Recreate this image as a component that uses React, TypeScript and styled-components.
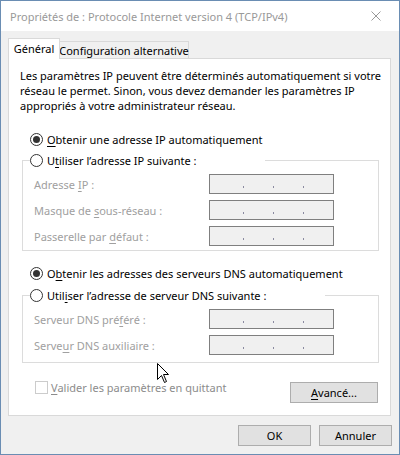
import React from "react";
import styled, { createGlobalStyle } from "styled-components";

const FONT = `"Noto Sans", "Open Sans", "Liberation Sans", sans-serif`;

const Global = createGlobalStyle`
  html, body { margin: 0; padding: 0; background: #ffffff; }
  body { font-family: ${FONT}; font-size: 11px; }
  *, *::before, *::after { box-sizing: border-box; }
`;

const Window = styled.div`
  position: relative;
  width: 400px;
  height: 455px;
  border: 1px solid #6a8db3;
  background: #f0f0f0;
  display: flex;
  flex-direction: column;
  font-family: ${FONT};
  font-size: 11px;
  color: #000;
  overflow: hidden;
`;

const TitleBar = styled.div`
  height: 30px;
  flex: none;
  background: #ffffff;
  display: flex;
  align-items: center;
  padding-left: 9px;
`;

const Title = styled.div`
  flex: 1;
  color: #999999;
  font-size: 11px;
  white-space: nowrap;
`;

const CloseBtn = styled.div`
  width: 46px;
  height: 30px;
  display: flex;
  align-items: center;
  justify-content: center;
`;

const Body = styled.div`
  display: flex;
  flex-direction: column;
  padding: 7px 8px 0 7px;
`;

const TabStrip = styled.div`
  display: flex;
  align-items: flex-end;
  height: 20px;
  position: relative;
  z-index: 1;
`;

const Tab = styled.div<{ $active?: boolean }>`
  display: flex;
  align-items: center;
  justify-content: center;
  white-space: nowrap;
  border: 1px solid #d9d9d9;
  border-bottom: none;
  background: ${(p) => (p.$active ? "#ffffff" : "#f0f0f0")};
  height: ${(p) => (p.$active ? "21px" : "17px")};
  margin-bottom: ${(p) => (p.$active ? "-1px" : "0")};
  width: ${(p) => (p.$active ? "52px" : "130px")};
  margin-left: ${(p) => (p.$active ? "0" : "-1px")};
  position: relative;
  z-index: ${(p) => (p.$active ? 2 : 1)};
  padding-bottom: ${(p) => (p.$active ? "1px" : "0")};
`;

const Panel = styled.div`
  height: 358px;
  background: #ffffff;
  border: 1px solid #d9d9d9;
  display: flex;
  flex-direction: column;
  padding-top: 9px;
`;

const Description = styled.p`
  margin: 0 0 0 11px;
  line-height: 15px;
  white-space: nowrap;
`;

const RadioRow = styled.label<{ $mt: number }>`
  display: flex;
  align-items: center;
  gap: 4px;
  height: 16px;
  margin-top: ${(p) => p.$mt}px;
  margin-left: 21px;
  white-space: nowrap;
`;

const RadioCircle = styled.span<{ $checked?: boolean }>`
  width: 13px;
  height: 13px;
  flex: none;
  border-radius: 50%;
  border: 1px solid #333333;
  background: #ffffff;
  display: flex;
  align-items: center;
  justify-content: center;
  &::after {
    content: "";
    width: 7px;
    height: 7px;
    border-radius: 50%;
    background: ${(p) => (p.$checked ? "#333333" : "transparent")};
  }
`;

const Group = styled.fieldset<{ $mt: number; $pb: number }>`
  margin: ${(p) => p.$mt}px 11px 0 13px;
  padding: 6px 0 ${(p) => p.$pb}px 11px;
  border: 1px solid #dcdcdc;
  min-width: 0;
  display: grid;
  grid-template-columns: 175px 125px;
  row-gap: 6px;
  align-items: center;
`;

const Legend = styled.legend<{ $w: number }>`
  width: ${(p) => p.$w}px;
  padding: 0;
  margin-left: -4px;
  background: #ffffff;
`;

const LegendRadio = styled.span`
  display: flex;
  align-items: center;
  gap: 4px;
  height: 16px;
  white-space: nowrap;
`;

const FieldLabel = styled.span`
  color: #a0a0a0;
  white-space: nowrap;
`;

const IpBox = styled.div`
  height: 20px;
  border: 1px solid #7f7f7f;
  background: #f0f0f0;
  display: flex;
  align-items: flex-end;
  gap: 29px;
  padding: 0 0 5px 33px;
`;

const IpDot = styled.span`
  width: 1px;
  height: 2px;
  background: #8a8aa0;
`;

const BottomRow = styled.div`
  display: flex;
  align-items: flex-start;
  margin-top: 18px;
  margin-left: 26px;
  margin-right: 12px;
`;

const CheckLabel = styled.label`
  flex: 1;
  display: flex;
  align-items: center;
  gap: 3px;
  color: #8c8c8c;
  height: 13px;
  white-space: nowrap;
`;

const CheckBox = styled.span`
  width: 13px;
  height: 13px;
  flex: none;
  border: 1px solid #cccccc;
  background: #ffffff;
`;

const Button = styled.button<{ $w: number; $mt?: number }>`
  width: ${(p) => p.$w}px;
  height: 21px;
  margin-top: ${(p) => p.$mt ?? 0}px;
  border: 1px solid #adadad;
  background: #e1e1e1;
  font-family: ${FONT};
  font-size: 11px;
  color: #000;
  padding: 0;
  display: flex;
  align-items: center;
  justify-content: center;
`;

const Footer = styled.div`
  display: flex;
  justify-content: flex-end;
  gap: 8px;
  margin-top: 9px;
  margin-right: -1px;
`;

const Key = styled.span`
  text-decoration: underline;
  text-underline-offset: 2px;
`;

const Cursor = styled.svg`
  position: absolute;
  left: 156px;
  top: 362px;
  pointer-events: none;
`;

function IpField() {
  return (
    <IpBox>
      <IpDot />
      <IpDot />
      <IpDot />
    </IpBox>
  );
}

export default function App() {
  return (
    <>
      <Global />
      <Window>
        <TitleBar>
          <Title>Propriétés de : Protocole Internet version 4 (TCP/IPv4)</Title>
          <CloseBtn>
            <svg width="10" height="10" viewBox="0 0 10 10">
              <path d="M0.5 0.5 L9.5 9.5 M9.5 0.5 L0.5 9.5" stroke="#999" strokeWidth="1" fill="none" />
            </svg>
          </CloseBtn>
        </TitleBar>
        <Body>
          <TabStrip>
            <Tab $active>Général</Tab>
            <Tab>Configuration alternative</Tab>
          </TabStrip>
          <Panel>
            <Description>
              Les paramètres IP peuvent être déterminés automatiquement si votre
              <br />
              réseau le permet. Sinon, vous devez demander les paramètres IP
              <br />
              appropriés à votre administrateur réseau.
            </Description>
            <RadioRow $mt={18}>
              <RadioCircle $checked />
              <span>
                <Key>O</Key>btenir une adresse IP automatiquement
              </span>
            </RadioRow>
            <Group $mt={5} $pb={4}>
              <Legend $w={235}>
                <LegendRadio>
                  <RadioCircle />
                  <span>
                    U<Key>t</Key>iliser l’adresse IP suivante :
                  </span>
                </LegendRadio>
              </Legend>
              <FieldLabel>
                Adresse <Key>I</Key>P :
              </FieldLabel>
              <IpField />
              <FieldLabel>
                Masque de <Key>s</Key>ous-réseau :
              </FieldLabel>
              <IpField />
              <FieldLabel>
                Passerelle par <Key>d</Key>éfaut :
              </FieldLabel>
              <IpField />
            </Group>
            <RadioRow $mt={14}>
              <RadioCircle $checked />
              <span>
                O<Key>b</Key>tenir les adresses des serveurs DNS automatiquement
              </span>
            </RadioRow>
            <Group $mt={6} $pb={7}>
              <Legend $w={295}>
                <LegendRadio>
                  <RadioCircle />
                  <span>
                    Util<Key>i</Key>ser l’adresse de serveur DNS suivante :
                  </span>
                </LegendRadio>
              </Legend>
              <FieldLabel>
                Serveur DNS pré<Key>f</Key>éré :
              </FieldLabel>
              <IpField />
              <FieldLabel>
                Serve<Key>u</Key>r DNS auxiliaire :
              </FieldLabel>
              <IpField />
            </Group>
            <BottomRow>
              <CheckLabel>
                <CheckBox />
                <span>
                  <Key>V</Key>alider les paramètres en quittant
                </span>
              </CheckLabel>
              <Button $w={88} $mt={1}>
                <span>
                  <Key>A</Key>vancé...
                </span>
              </Button>
            </BottomRow>
          </Panel>
          <Footer>
            <Button $w={73}>OK</Button>
            <Button $w={73}>Annuler</Button>
          </Footer>
        </Body>
        <Cursor width="13" height="21" viewBox="0 0 13 21">
          <path
            d="M0.5 0.5 L0.5 16.5 L4.5 12.5 L7.5 19.5 L9.5 18.5 L6.5 11.5 L11.5 11.5 Z"
            fill="#ffffff"
            stroke="#000000"
            strokeWidth="1"
            strokeLinejoin="miter"
          />
        </Cursor>
      </Window>
    </>
  );
}
